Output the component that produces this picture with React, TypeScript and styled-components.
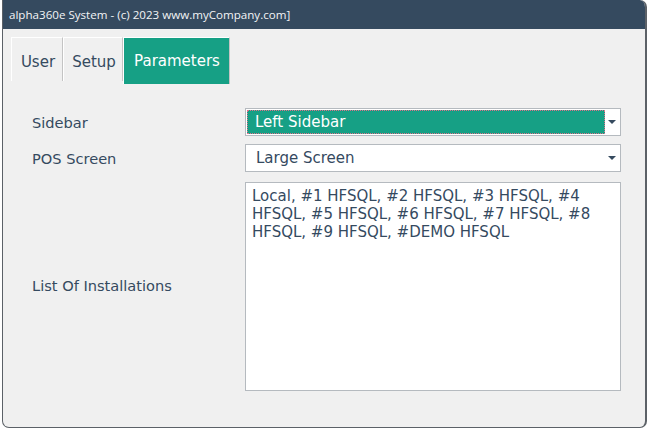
import React from "react";
import styled, { createGlobalStyle } from "styled-components";

const c = {
  navy: "#354a5f",
  teal: "#16a085",
  panel: "#f0f0f0",
  field: "#b5babf",
  text: "#354a5f",
};

const Global = createGlobalStyle`
  html, body {
    margin: 0;
    padding: 0;
    background: #ffffff;
    overflow: hidden;
  }
  #root {
    width: 649px;
    height: 431px;
  }
`;

const Page = styled.div`
  width: 649px;
  height: 431px;
  padding: 0 2px 0 2px;
  box-sizing: border-box;
`;

const Window = styled.div`
  width: 645px;
  height: 428px;
  box-sizing: border-box;
  border: 1px solid #5c6167;
  border-right-width: 2px;
  border-top: none;
  border-radius: 0 7px 7px 7px;
  background: ${c.panel};
  overflow: hidden;
  display: flex;
  flex-direction: column;
`;

const TitleBar = styled.div`
  height: 29px;
  flex: none;
  background: ${c.navy};
  color: #f2f4f6;
  font-family: "Open Sans", "Noto Sans", sans-serif;
  font-size: 11.6px;
  display: flex;
  align-items: center;
  padding-left: 7px;
  margin: 0 -2px 0 -1px;
  border-radius: 0 7px 0 0;
`;

const Body = styled.div`
  flex: 1;
  padding: 8px 0 0 8px;
  display: flex;
  flex-direction: column;
`;

const Tabs = styled.div`
  display: flex;
  align-items: flex-start;
`;

const Tab = styled.div<{ $active?: boolean; $width: number }>`
  box-sizing: border-box;
  width: ${(p) => p.$width}px;
  height: ${(p) => (p.$active ? 47 : 44)}px;
  padding: ${(p) => (p.$active ? "0 0 0 1px" : "4px 0 0 2px")};
  display: flex;
  align-items: center;
  justify-content: center;
  font-family: "DejaVu Sans", Verdana, sans-serif;
  font-size: 15px;
  color: ${(p) => (p.$active ? "#ffffff" : c.text)};
  background: ${(p) => (p.$active ? c.teal : "transparent")};
  border-top: 1px solid #ffffff;
  border-left: 1px solid #ffffff;
  border-right: 1px solid #c4c4c4;
`;

const Form = styled.div`
  margin-top: 24px;
  padding-left: 21px;
  display: grid;
  grid-template-columns: 213px 376px;
  row-gap: 8px;
  align-items: center;
  font-family: "DejaVu Sans", Verdana, sans-serif;
  font-size: 15px;
  color: ${c.text};
`;

const Label = styled.div`
  font-size: 14.6px;
`;

const Select = styled.div`
  box-sizing: border-box;
  height: 28px;
  border: 1px solid ${c.field};
  background: #ffffff;
  padding: 1px;
  display: flex;
  align-items: stretch;
`;

const SelectValue = styled.div<{ $focus?: boolean }>`
  flex: 1;
  display: flex;
  align-items: center;
  padding-left: ${(p) => (p.$focus ? 7 : 8)}px;
  background: ${(p) => (p.$focus ? c.teal : "transparent")};
  color: ${(p) => (p.$focus ? "#ffffff" : c.text)};
  border: ${(p) => (p.$focus ? "1px dotted #e0708a" : "1px solid transparent")};
`;

const Arrow = styled.div`
  width: 14px;
  display: flex;
  align-items: center;
  justify-content: center;
  &::after {
    content: "";
    border-left: 4px solid transparent;
    border-right: 4px solid transparent;
    border-top: 4px solid ${c.navy};
  }
`;

const TextArea = styled.div`
  box-sizing: border-box;
  height: 209px;
  margin-top: 2px;
  border: 1px solid ${c.field};
  background: #ffffff;
  padding: 4px 6px;
  line-height: 18px;
  white-space: pre-line;
`;

const installations =
  "Local, #1 HFSQL, #2 HFSQL, #3 HFSQL, #4\nHFSQL, #5 HFSQL, #6 HFSQL, #7 HFSQL, #8\nHFSQL, #9 HFSQL, #DEMO HFSQL";

export default function App() {
  return (
    <Page>
      <Global />
      <Window>
        <TitleBar>alpha360e System - (c) 2023 www.myCompany.com]</TitleBar>
        <Body>
          <Tabs>
            <Tab $width={52}>User</Tab>
            <Tab $width={60}>Setup</Tab>
            <Tab $width={107} $active>
              Parameters
            </Tab>
          </Tabs>
          <Form>
            <Label>Sidebar</Label>
            <Select>
              <SelectValue $focus>Left Sidebar</SelectValue>
              <Arrow />
            </Select>
            <Label>POS Screen</Label>
            <Select>
              <SelectValue>Large Screen</SelectValue>
              <Arrow />
            </Select>
            <Label>List Of Installations</Label>
            <TextArea>{installations}</TextArea>
          </Form>
        </Body>
      </Window>
    </Page>
  );
}
